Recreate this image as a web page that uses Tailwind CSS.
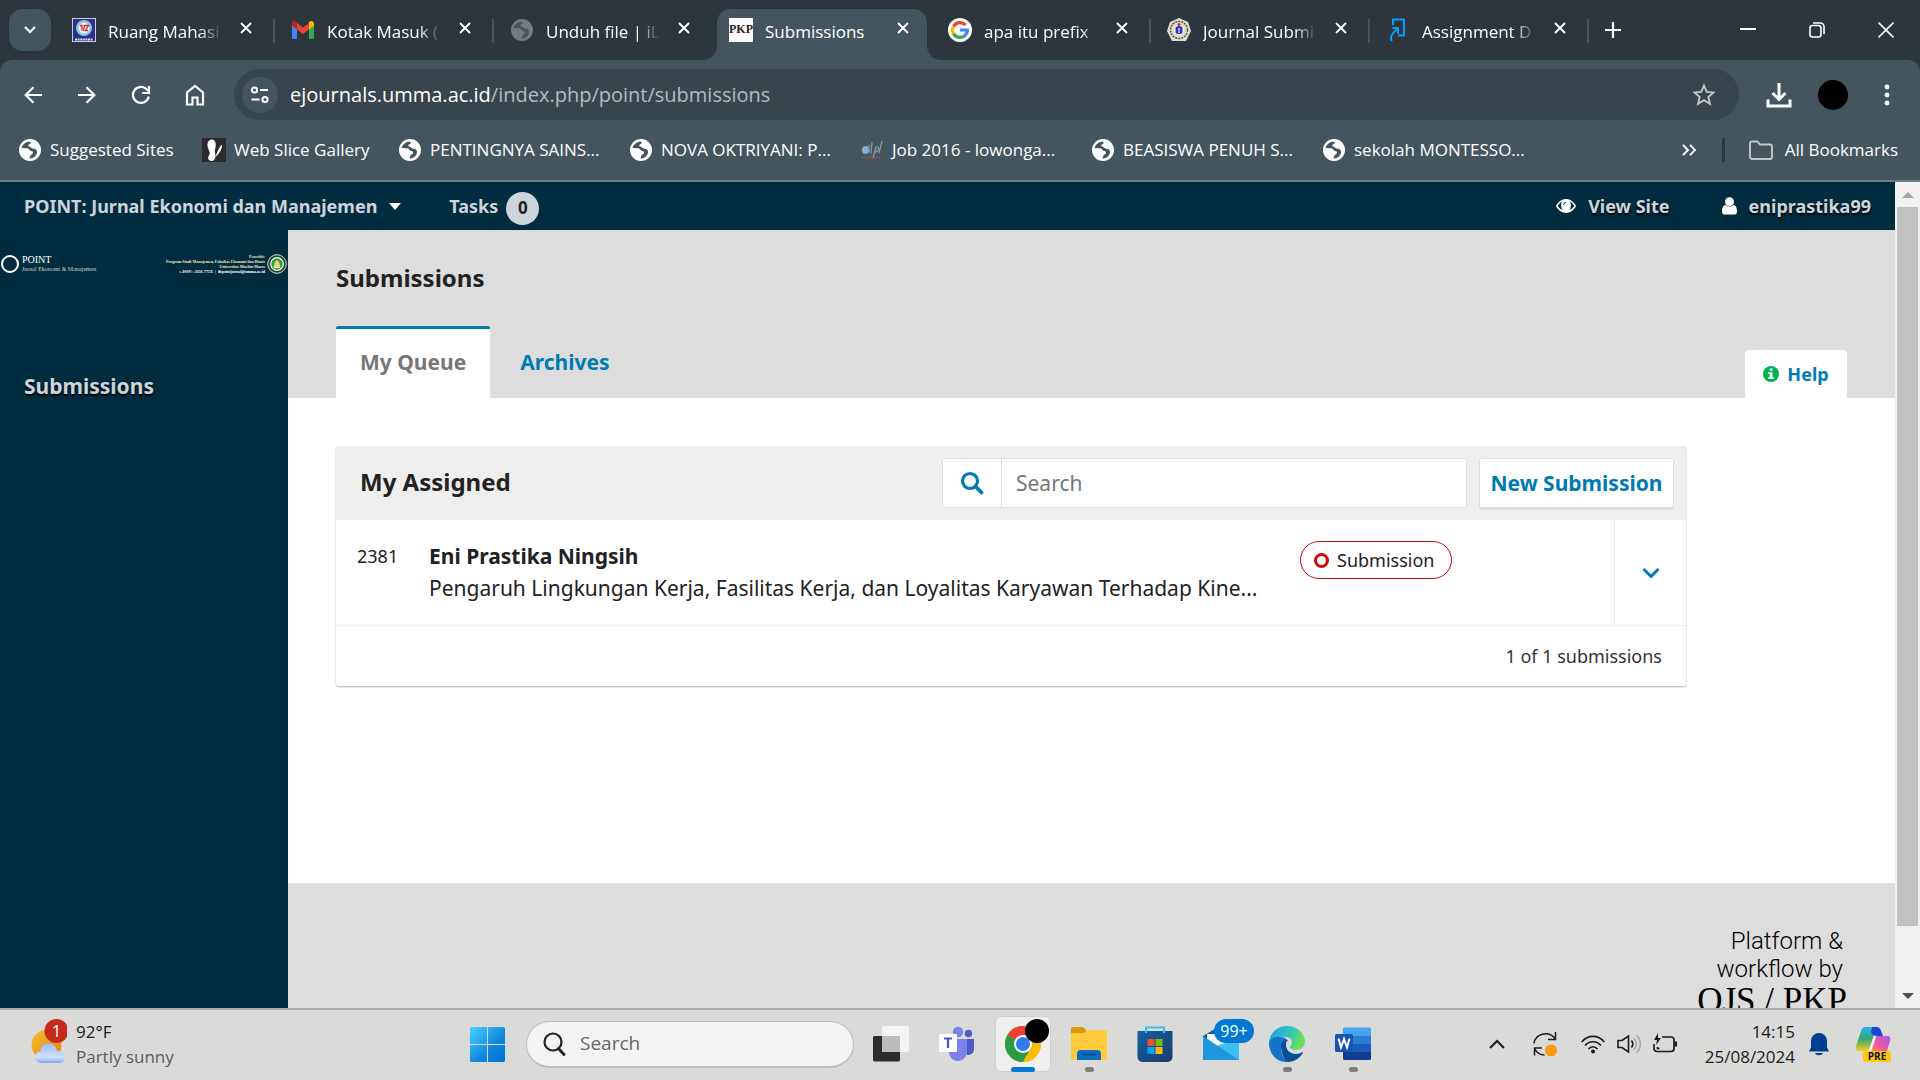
<!DOCTYPE html>
<html lang="en">
<head>
  <meta charset="utf-8" />
  <meta name="viewport" content="width=device-width, initial-scale=1" />
  <title>Submissions</title>
  <script src="https://cdn.jsdelivr.net/npm/@tailwindcss/browser@4"></script>
</head>
<body class="h-screen flex flex-col overflow-hidden bg-white font-['Open_Sans',sans-serif]">
  <!-- shared icons -->
  <svg class="hidden">
    <symbol id="globe" viewBox="0 0 24 24">
      <circle cx="12" cy="12" r="11" fill="currentColor" />
      <path d="M11.5 3.500C7.500 4 4.500 6.500 3.600 10l5.400.2c2.600.2 2.200 2.600 4.600 2.800 1.900.2 1.900 2.400.4 3.200-1.700.8-2.300 2.200-2.300 4.500 4.600-.5 6.700-3 7.300-5.900.5-2.600-1.200-4-3.600-4.100-2-.1-2.400-1.900-4.200-2.200-1.500-.3-1.300-1.900.2-2.300 1.400-.4 1.700-1.500.1-2.700z" fill="#44555e" />
    </symbol>
    <symbol id="close" viewBox="0 0 12 12">
      <path d="M1 1l10 10M11 1L1 11" stroke="currentColor" stroke-width="1.900" fill="none" />
    </symbol>
    <symbol id="lens" viewBox="0 0 24 24">
      <circle cx="10" cy="10" r="7.500" fill="none" stroke="currentColor" stroke-width="3.200" />
      <path d="M15.500 15.500l6 6" stroke="currentColor" stroke-width="3.800" stroke-linecap="round" />
    </symbol>
  </svg>

  <!-- tab strip -->
  <header class="h-[60px] shrink-0 flex bg-[#2c363c] text-white text-[17px]">
    <div class="w-14 shrink-0 pl-[9px] pt-[9px]">
      <button aria-label="Search tabs" class="w-[42px] h-[42px] rounded-[14px] bg-[#44555e] grid place-items-center">
        <svg class="w-3 h-3" viewBox="0 0 12 12"><path d="M1 3l5 5 5-5" stroke="currentColor" stroke-width="2.200" fill="none" /></svg>
      </button>
    </div>
    <div class="w-[219px] shrink-0 flex items-center pl-4 relative">
      <svg class="w-6 h-6 shrink-0" viewBox="0 0 24 24"><rect width="24" height="24" fill="#2b2f8c" /><rect x=".5" y=".5" width="23" height="23" fill="none" stroke="#c9cbe8" /><circle cx="12" cy="10" r="8" fill="#8fc5dc" /><circle cx="12" cy="10" r="5.500" fill="#e8eef5" /><path d="M8 7.500h2v5M12.500 7l-1 6M13 7.500h3.500l-3 5H16" stroke="#d3262f" stroke-width="1.300" fill="none" /><path d="M3 21.500h18" stroke="#dfe0f5" stroke-width="2" stroke-dasharray="2 .6" /></svg>
      <span class="ml-3 pt-[3px] w-[114px] whitespace-nowrap [mask-image:linear-gradient(to_right,#000_80%,transparent)]">Ruang Mahasi</span>
      <button aria-label="Close tab" class="ml-[18px] -mt-1"><svg class="w-3 h-3"><use href="#close" /></svg></button>
      <span class="absolute right-0 top-[19px] w-[2px] h-6 bg-[#44555e]"></span>
    </div>
    <div class="w-[219px] shrink-0 flex items-center pl-4 relative">
      <svg class="w-6 h-6 shrink-0" viewBox="0 0 24 24"><path d="M1 5.500v14A1.500 1.500 0 0 0 2.500 21H6V10z" fill="#4285f4" /><path d="M18 10v11h3.500a1.500 1.500 0 0 0 1.500-1.500v-14z" fill="#34a853" /><path d="M18 5v6.500l5-4V5.500C23 3 20 2 18 4z" fill="#fbbc04" /><path d="M6 11.500V5l6 4.500L18 5v6.500L12 16z" fill="#ea4335" /><path d="M1 5.500v2l5 4V4.500C4 2 1 3 1 5.500z" fill="#c5221f" /></svg>
      <span class="ml-3 pt-[3px] w-[114px] whitespace-nowrap [mask-image:linear-gradient(to_right,#000_80%,transparent)]">Kotak Masuk (</span>
      <button aria-label="Close tab" class="ml-[18px] -mt-1"><svg class="w-3 h-3"><use href="#close" /></svg></button>
      <span class="absolute right-0 top-[19px] w-[2px] h-6 bg-[#44555e]"></span>
    </div>
    <div class="w-[219px] shrink-0 flex items-center pl-4 relative">
      <svg class="w-6 h-6 shrink-0 text-[#75797c]"><use href="#globe" /></svg>
      <span class="ml-3 pt-[3px] w-[114px] whitespace-nowrap [mask-image:linear-gradient(to_right,#000_80%,transparent)]">Unduh file | iL</span>
      <button aria-label="Close tab" class="ml-[18px] -mt-1"><svg class="w-3 h-3"><use href="#close" /></svg></button>
    </div>
    <div class="w-[219px] shrink-0 flex items-center pl-4 relative">
      <svg class="absolute -left-3 bottom-0 w-[242px] h-[51px]" viewBox="0 0 242 51"><path d="M0 51C10 51 16 45 16 36V14C16 6 22 0 30 0H212C220 0 226 6 226 14V36C226 45 232 51 242 51z" fill="#44555e" /></svg>
      <span class="relative w-6 h-6 shrink-0 bg-white text-[#222] font-['Liberation_Serif',serif] font-bold text-[12px] leading-[22px] text-center">PKP</span>
      <span class="relative ml-3 pt-[3px] w-[114px] whitespace-nowrap">Submissions</span>
      <button aria-label="Close tab" class="relative ml-[18px] -mt-1"><svg class="w-3 h-3"><use href="#close" /></svg></button>
    </div>
    <div class="w-[219px] shrink-0 flex items-center pl-4 relative">
      <svg class="w-6 h-6 shrink-0" viewBox="0 0 24 24"><circle cx="12" cy="12" r="12" fill="#fff" /><g fill="none" stroke-width="3.200"><path d="M17.500 7A7.500 7.500 0 0 0 5.500 8.400" stroke="#ea4335" /><path d="M5.500 8.300a7.500 7.500 0 0 0 0 7.400" stroke="#fbbc05" /><path d="M5.500 15.600a7.500 7.500 0 0 0 11.400 2" stroke="#34a853" /><path d="M16.800 17.700A7.500 7.500 0 0 0 19.400 12H12" stroke="#4285f4" /></g></svg>
      <span class="ml-3 pt-[3px] w-[114px] whitespace-nowrap [mask-image:linear-gradient(to_right,#000_85%,transparent)]">apa itu prefix</span>
      <button aria-label="Close tab" class="ml-[18px] -mt-1"><svg class="w-3 h-3"><use href="#close" /></svg></button>
      <span class="absolute right-0 top-[19px] w-[2px] h-6 bg-[#44555e]"></span>
    </div>
    <div class="w-[219px] shrink-0 flex items-center pl-4 relative">
      <svg class="w-6 h-6 shrink-0" viewBox="0 0 24 24"><path d="M12 0l9 4 3 9-5 10H5L0 13l3-9z" fill="#dcdcd6" /><circle cx="12" cy="12" r="8.500" fill="none" stroke="#55554c" stroke-width="1.500" stroke-dasharray="2 1" /><circle cx="12" cy="12" r="6.500" fill="#e8e08a" /><circle cx="12" cy="12" r="5" fill="#fff" /><path d="M8.500 9.500c2-2 5-2 7 0v5c-1 2-6 2-7 0z" fill="#2233dd" /><circle cx="12" cy="6.500" r="1.500" fill="#e02020" /><path d="M12 10v5" stroke="#fff" stroke-width="1.200" /></svg>
      <span class="ml-3 pt-[3px] w-[114px] whitespace-nowrap [mask-image:linear-gradient(to_right,#000_80%,transparent)]">Journal Submi</span>
      <button aria-label="Close tab" class="ml-[18px] -mt-1"><svg class="w-3 h-3"><use href="#close" /></svg></button>
      <span class="absolute right-0 top-[19px] w-[2px] h-6 bg-[#44555e]"></span>
    </div>
    <div class="w-[219px] shrink-0 flex items-center pl-4 relative">
      <svg class="w-6 h-6 shrink-0" viewBox="0 0 24 24"><path d="M7 7V1.500h11v16h-6M6 23c-3-4 0-7 6-13M6.500 10H12v6" fill="none" stroke="#0a9bff" stroke-width="2" /></svg>
      <span class="ml-3 pt-[3px] w-[114px] whitespace-nowrap [mask-image:linear-gradient(to_right,#000_80%,transparent)]">Assignment D</span>
      <button aria-label="Close tab" class="ml-[18px] -mt-1"><svg class="w-3 h-3"><use href="#close" /></svg></button>
      <span class="absolute right-0 top-[19px] w-[2px] h-6 bg-[#44555e]"></span>
    </div>
    <button aria-label="New tab" class="w-12 shrink-0 grid place-items-center">
      <svg class="w-4 h-4" viewBox="0 0 16 16"><path d="M8 0v16M0 8h16" stroke="currentColor" stroke-width="2.200" /></svg>
    </button>
    <div class="ml-auto flex">
      <button aria-label="Minimize" class="w-[69px] grid place-items-center"><svg class="w-4 h-4" viewBox="0 0 16 16"><path d="M0 7h16" stroke="currentColor" stroke-width="2" /></svg></button>
      <button aria-label="Restore" class="w-[69px] grid place-items-center"><svg class="w-4 h-4" viewBox="0 0 16 16" fill="none" stroke="currentColor" stroke-width="1.600"><rect x="1" y="3.500" width="11" height="11.500" rx="2.500" /><path d="M4 1h7.500A3.500 3.500 0 0 1 15 4.500V12" /></svg></button>
      <button aria-label="Close" class="w-[69px] grid place-items-center"><svg class="w-4 h-4" viewBox="0 0 16 16"><path d="M.5.500l15 15M15.500.500l-15 15" stroke="currentColor" stroke-width="1.600" /></svg></button>
    </div>
  </header>

  <!-- toolbar -->
  <div class="bg-[#2c363c] shrink-0">
    <div class="h-[69px] pt-[9px] pb-[9px] flex items-center bg-[#44555e] rounded-t-xl text-white pl-[6px] pr-[6px]">
      <button aria-label="Back" class="w-[54px] grid place-items-center"><svg class="w-[18px] h-[18px]" viewBox="0 0 18 18"><path d="M18 9H2M9.500 1.200L1.700 9l7.800 7.800" stroke="currentColor" stroke-width="2.200" fill="none" /></svg></button>
      <button aria-label="Forward" class="w-[54px] grid place-items-center"><svg class="w-[18px] h-[18px]" viewBox="0 0 18 18"><path d="M0 9h16M8.500 1.200L16.300 9l-7.800 7.800" stroke="currentColor" stroke-width="2.200" fill="none" /></svg></button>
      <button aria-label="Reload" class="w-[54px] grid place-items-center"><svg class="w-[20px] h-[20px]" viewBox="0 0 20 20"><path d="M17.800 11.500A8 8 0 1 1 15.700 4.300L18 6.500" stroke="currentColor" stroke-width="2.200" fill="none" /><path d="M18 1v7h-7" stroke="currentColor" stroke-width="2.200" fill="none" /></svg></button>
      <button aria-label="Home" class="w-[54px] grid place-items-center"><svg class="w-[20px] h-[22px]" viewBox="0 0 20 22"><path d="M2 20.500V8.500L10 2l8 6.500v12h-5.500v-7h-5v7z" stroke="currentColor" stroke-width="2.200" fill="none" /></svg></button>
      <div class="ml-3 mr-[13px] flex-1 h-[51px] rounded-full bg-[#39454c] flex items-center pl-2">
        <button aria-label="Site information" class="w-9 h-9 rounded-full bg-[#44555e] grid place-items-center"><svg class="w-5 h-[18px]" viewBox="0 0 20 18" fill="none" stroke="currentColor" stroke-width="2"><circle cx="4.500" cy="4" r="2.600" /><path d="M10 4h8M1.500 13.500h8" /><circle cx="15" cy="13.500" r="2.600" /></svg></button>
        <div role="textbox" contenteditable="true" spellcheck="false" aria-label="Address" class="ml-3 flex-1 text-[20px] leading-7 text-[#b4bbc0] outline-none"><span class="text-white">ejournals.umma.ac.id</span>/index.php/point/submissions</div>
        <button aria-label="Bookmark" class="mr-[23px] text-[#c4c6c8]"><svg class="w-6 h-6" viewBox="0 0 24 24"><path d="M12 2.500l2.700 6.400 6.800.6-5.200 4.500 1.600 6.800-5.900-3.600-5.900 3.600 1.600-6.800-5.200-4.500 6.800-.6z" stroke="currentColor" stroke-width="1.900" fill="none" /></svg></button>
      </div>
      <button aria-label="Downloads" class="w-[54px] grid place-items-center"><svg class="w-[26px] h-[26px]" viewBox="0 0 26 26" fill="none" stroke="currentColor" stroke-width="3"><path d="M13 1v16M6.500 11l6.500 6.500 6.500-6.500M2 17.500V24h22v-6.500" /></svg></button>
      <button aria-label="Profile" class="w-[54px] grid place-items-center"><span class="w-[30px] h-[30px] rounded-full bg-black"></span></button>
      <button aria-label="Menu" class="w-[54px] grid place-items-center"><svg class="w-[6px] h-[22px]" viewBox="0 0 6 22" fill="currentColor"><circle cx="3" cy="3" r="2.400" /><circle cx="3" cy="11" r="2.400" /><circle cx="3" cy="19" r="2.400" /></svg></button>
    </div>
  </div>

  <!-- bookmarks bar -->
  <nav class="h-[53px] shrink-0 bg-[#44555e] border-b-2 border-[#6f7e85] flex items-start pt-2 pl-[18px] text-white text-[17px] leading-[26px] whitespace-nowrap">
    <a href="#" class="w-[184px] flex items-center gap-2"><svg class="w-6 h-6"><use href="#globe" /></svg>Suggested Sites</a>
    <a href="#" class="w-[196px] flex items-center gap-2"><svg class="w-6 h-6" viewBox="0 0 24 24"><rect width="24" height="24" fill="#2b2b2b" /><path d="M10 1.500c4 0 4.500 6 3 10-.8 2 .5 4 .5 6.500 0 3-2 5.500-4.500 5-3.500-.7-3.500-4-1.500-6.500C9 14 5 11 5.500 6c.3-3 2-4.500 4.500-4.500zM13.500 19c1-3 4-11 6-12 2 0-1 8-6 12z" fill="#fff" /></svg>Web Slice Gallery</a>
    <a href="#" class="w-[231px] flex items-center gap-2"><svg class="w-6 h-6"><use href="#globe" /></svg>PENTINGNYA SAINS...</a>
    <a href="#" class="w-[231px] flex items-center gap-2"><svg class="w-6 h-6"><use href="#globe" /></svg>NOVA OKTRIYANI: P...</a>
    <a href="#" class="w-[231px] flex items-center gap-2"><svg class="w-6 h-6" viewBox="0 0 24 24" fill="none"><ellipse cx="5.500" cy="12" rx="3.500" ry="4" fill="#7eb0d8" /><path d="M9 7v8M12 4l-1 12M13 20l3-11c4-1 3 5-1 5M22 3l-3 12" stroke="#8d999f" stroke-width="1.200" /><path d="M2 19.500h20" stroke="#77565a" stroke-width="2" stroke-dasharray="3 1" /></svg>Job 2016 - lowonga...</a>
    <a href="#" class="w-[231px] flex items-center gap-2"><svg class="w-6 h-6"><use href="#globe" /></svg>BEASISWA PENUH S...</a>
    <a href="#" class="flex items-center gap-2"><svg class="w-6 h-6"><use href="#globe" /></svg>sekolah MONTESSO...</a>
    <div class="ml-auto h-[26px] flex items-center pr-[22px]">
      <button aria-label="More bookmarks"><svg class="w-[14px] h-3" viewBox="0 0 14 12"><path d="M1 .8L6 6l-5 5.200M8 .8L13 6l-5 5.200" stroke="currentColor" stroke-width="1.900" fill="none" /></svg></button>
      <span class="ml-[26px] mr-6 w-[3px] h-6 bg-[#2c363c]"></span>
      <a href="#" class="flex items-center gap-3"><svg class="w-6 h-6" viewBox="0 0 24 24"><path d="M1 5.500C1 4 2 3.500 3 3.500h5.500l2.500 3h10c1.500 0 2 .8 2 2V19c0 1.200-.8 2-2 2H3c-1.200 0-2-.8-2-2z" stroke="#c4c6c8" stroke-width="1.900" fill="none" /></svg>All Bookmarks</a>
    </div>
  </nav>

  <!-- page -->
  <div class="flex-1 min-h-0 flex font-['Noto_Sans',sans-serif]">
    <div class="flex-1 min-w-0 flex flex-col">
      <div class="h-12 shrink-0 bg-[#002c40] flex items-center pl-6 pr-6 text-[18px] font-bold text-[#ccd5d9] [text-shadow:0_2px_2px_#000]">
        <button class="flex items-center gap-3">POINT: Jurnal Ekonomi dan Manajemen<svg class="w-3 h-[7px]" viewBox="0 0 12 7"><path d="M0 0h12L6 7z" fill="#fff" /></svg></button>
        <button class="ml-12 flex items-center gap-2">Tasks <span class="mt-1 w-[33px] h-[33px] rounded-full bg-[#ccd5db] text-[#222] text-[17px] grid place-items-center [text-shadow:none]">0</span></button>
        <a href="#" class="ml-auto flex items-center gap-3"><svg class="w-5 h-[14px]" viewBox="0 0 20 14"><path d="M0 7C5-2.300 15-2.300 20 7 15 16.300 5 16.300 0 7z" fill="#fff" /><path d="M1.800 7C3.500 4 5.500 2.500 6 2.500 4.500 5 5 9 6.500 11 4.500 10 3 9 1.800 7zM18.200 7C16.500 4 14.500 2.500 14 2.500c1.500 2.500 1 6.500-.5 8.500 2-1 3.500-2 4.700-4z" fill="#002c40" /><path d="M7.500 6A2.700 2.700 0 0 1 10 3.500" stroke="#002c40" fill="none" /></svg>View Site</a>
        <a href="#" class="ml-[52px] flex items-center gap-3"><svg class="w-[15px] h-[18px]" viewBox="0 0 15 18"><circle cx="7.500" cy="4.800" r="4.500" fill="#fff" /><path d="M3.500 8c2.500 2 5.500 2 8 0 2.300.2 3.500 3 3.500 6s-1.300 3.500-3 3.500H3c-1.700 0-3-.5-3-3.500s1.200-5.800 3.500-6z" fill="#fff" /></svg>eniprastika99</a>
      </div>
      <div class="flex-1 min-h-0 flex">
        <aside class="w-[288px] shrink-0 bg-[#002c40]">
          <a href="#" aria-label="POINT" class="mt-6 h-5 flex items-center text-white font-['Liberation_Serif',serif] whitespace-nowrap px-px">
            <svg class="w-[18px] h-[18px]" viewBox="0 0 18 18"><circle cx="9" cy="9" r="8" fill="none" stroke="#fff" stroke-width="2" /></svg>
            <span class="ml-[3px]"><span class="block text-[10px] leading-[11px]">POINT</span><span class="block text-[6px] leading-[9px] text-[#c8d0d4]">Jurnal Ekonomi &amp; Manajemen</span></span>
            <span class="ml-auto text-right text-[4px] leading-[5px] font-bold text-[#f0e8c0]">Penerbit:<br />Program Studi Manajemen, Fakultas Ekonomi dan Bisnis<br />Universitas Muslim Maros<br /><span class="text-white">e-ISSN : 2656-775X &nbsp;|&nbsp; ✉ pointjurnal@umma.ac.id</span></span>
            <svg class="ml-[2px] w-5 h-5" viewBox="0 0 20 20"><circle cx="10" cy="10" r="9.300" fill="#1d4a2c" stroke="#cfe0c8" /><circle cx="10" cy="10" r="6.300" fill="#2f9e44" stroke="#fff" stroke-width="1.200" /><path d="M6.500 13l1.500-5 2-2 2 2 1.500 5z" fill="#e6d26a" /><path d="M7 13.500h6" stroke="#fff" /></svg>
          </a>
          <nav class="mt-[98px] pl-6">
            <a href="#" class="text-[21px] leading-7 font-bold text-[#ccd5d9] [text-shadow:0_2px_2px_#000]">Submissions</a>
          </nav>
        </aside>
        <main class="flex-1 min-w-0 flex flex-col text-[#222]">
          <div class="h-[168px] shrink-0 bg-[#ddd] pl-12 pr-12 flex flex-col">
            <h1 class="mt-8 text-[24px] leading-8 font-bold">Submissions</h1>
            <div class="mt-auto flex items-end text-[21px] font-bold">
              <button class="h-[72px] px-6 pb-[2px] border-t-3 border-[#007ab2] bg-white text-[#777] rounded-t-[2px]">My Queue</button>
              <button class="h-[72px] ml-[6px] px-6 pb-[2px] border-t-3 border-transparent text-[#007ab2]">Archives</button>
              <button class="ml-auto h-12 w-[102px] bg-white rounded-t-[3px] flex items-center justify-center gap-2 text-[18px] text-[#007ab2]">
                <svg class="w-4 h-4" viewBox="0 0 16 16"><circle cx="8" cy="8" r="8" fill="#00b24e" /><path d="M6.700 2.500h2.800v2.200H6.700zM5.200 6.200h4.300v5h1.300v1.800H5.200v-1.800h1.500V8H5.200z" fill="#fff" /></svg>Help
              </button>
            </div>
          </div>
          <div class="flex-1 pt-12 pl-12 pr-[209px]">
            <section class="rounded-[3px] shadow-[0_1px_2px_rgba(0,0,0,0.3)]">
              <div class="h-[74px] bg-[#eee] flex items-center pl-6 pr-3">
                <h2 class="pb-[2px] text-[24px] leading-8 font-bold">My Assigned</h2>
                <div class="ml-auto w-[525px] h-[50px] flex border border-[#ddd] rounded-[3px] bg-white">
                  <label for="search" class="w-[59px] grid place-items-center text-[#007ab2] border-r border-[#ddd]"><svg class="w-6 h-6" aria-label="Search"><use href="#lens" /></svg></label>
                  <input id="search" type="search" placeholder="Search" class="flex-1 min-w-0 px-[14px] pt-[2px] text-[21px] outline-none placeholder:text-[#777]" />
                </div>
                <button class="ml-3 h-[50px] w-[195px] pt-[2px] whitespace-nowrap bg-white border border-[#ddd] rounded-[3px] shadow-[0_2px_0_#ddd] text-[21px] font-bold text-[#007ab2]">New Submission</button>
              </div>
              <div class="h-[106px] border-b border-[#eee] flex">
                <span class="w-[93px] pl-[21px] pt-[22px] text-[18px] leading-7">2381</span>
                <div class="w-[871px] pt-5">
                  <p class="text-[21px] leading-8 font-bold">Eni Prastika Ningsih</p>
                  <p class="text-[21px] leading-8">Pengaruh Lingkungan Kerja, Fasilitas Kerja, dan Loyalitas Karyawan Terhadap Kine...</p>
                </div>
                <span class="mt-[21px] h-[38px] px-[13px] flex items-center gap-2 border border-[#d00a0a] rounded-full text-[18px]"><span class="w-[15px] h-[15px] rounded-full border-[3px] border-[#d00a0a]"></span><a href="#" class="pr-1">Submission</a></span>
                <button aria-label="Show details" class="ml-auto w-[72px] border-l border-[#eee] grid place-items-center text-[#007ab2]"><svg class="w-[18px] h-3" viewBox="0 0 18 12"><path d="M1.500 2L9 9.500 16.500 2" stroke="currentColor" stroke-width="3" fill="none" /></svg></button>
              </div>
              <p class="h-[60px] pr-6 text-right text-[18px] leading-[60px] text-[#333]">1 of 1 submissions</p>
            </section>
          </div>
          <footer class="h-[125px] shrink-0 overflow-hidden bg-[#ddd] pt-11 pr-[48px] text-right text-black">
            <p class="pr-1 text-[24px] leading-7 font-light font-['Roboto',sans-serif]">Platform &amp;<br />workflow by</p>
            <p class="text-[35px] leading-[36px] font-['Liberation_Serif',serif]">OJS / PKP</p>
          </footer>
        </main>
      </div>
    </div>
    <!-- scrollbar -->
    <div class="w-[25px] shrink-0 bg-[#f1f1f1] flex flex-col items-center">
      <svg class="w-3 h-[25px]" viewBox="0 0 12 25"><path d="M0 16l6-6 6 6z" fill="#a3a3a3" /></svg>
      <div class="w-[21px] h-[719px] bg-[#c1c1c1]"></div>
      <svg class="mt-auto w-3 h-[25px]" viewBox="0 0 12 25"><path d="M0 10l6 6 6-6z" fill="#505050" /></svg>
    </div>
  </div>

  <!-- taskbar -->
  <div class="h-[72px] shrink-0 bg-[#dadad9] border-t-2 border-[#adadad] flex items-center pl-[31px] pr-[29px] pb-[2px] text-[17px] leading-[25px] text-[#1b1b1b]">
    <button class="w-[433px] flex items-center gap-[9px] text-left">
      <svg class="w-9 h-[50px] shrink-0" viewBox="0 0 36 50">
        <defs>
          <linearGradient id="sun" x1="0" y1="0" x2="1" y2="1"><stop offset="0" stop-color="#f0c02c" /><stop offset="1" stop-color="#ee7a14" /></linearGradient>
          <linearGradient id="cloud" x1="0" y1="0" x2="0" y2="1"><stop offset="0" stop-color="#9dbdf2" /><stop offset=".7" stop-color="#cfe0fb" /><stop offset="1" stop-color="#88a8ea" /></linearGradient>
        </defs>
        <circle cx="15.500" cy="26" r="15" fill="url(#sun)" />
        <path d="M9 45a6 6 0 0 1-1-12c0-5 4-7.500 8-7.500s8 3 8.500 7.500A6 6 0 0 1 28 45z" fill="url(#cloud)" transform="translate(1.500 -1)" />
        <circle cx="25.500" cy="12" r="12" fill="#c42b1c" />
        <text x="25.500" y="18" text-anchor="middle" font-size="17" fill="#fff">1</text>
      </svg>
      <span>92°F<br /><span class="text-[#5c5c5c]">Partly sunny</span></span>
    </button>
    <button aria-label="Start" class="ml-[6px]"><svg class="w-[35px] h-[35px]" viewBox="0 0 35 35"><defs><linearGradient id="win" x1="0" y1="0" x2="1" y2="1"><stop offset="0" stop-color="#4ad2ff" /><stop offset=".6" stop-color="#0f86dc" /><stop offset="1" stop-color="#0074d1" /></linearGradient></defs><path d="M1.500 0H17v17H0V1.500A1.500 1.500 0 0 1 1.500 0zM18 0h15.500A1.500 1.500 0 0 1 35 1.500V17H18zM0 18h17v17H1.500A1.500 1.500 0 0 1 0 33.500zM18 18h17v15.500a1.500 1.500 0 0 1-1.500 1.500H18z" fill="url(#win)" /></svg></button>
    <form class="ml-[21px] w-[328px] h-[47px] flex items-center rounded-full bg-[#f3f3f3] border border-b-2 border-[#bdbdbd] pl-[15px]">
      <svg class="w-6 h-6 shrink-0" viewBox="0 0 24 24" fill="none" stroke="#222" stroke-width="2.200"><circle cx="11" cy="10" r="8.500" /><path d="M16.500 16.500l5.500 6" stroke-linecap="round" stroke-width="2.800" /></svg>
      <label for="tbsearch" class="sr-only">Search</label>
      <input id="tbsearch" placeholder="Search" class="ml-[14px] w-48 text-[19px] outline-none placeholder:text-[#666]" />
    </form>
    <div class="ml-1 flex h-full items-center">
      <button aria-label="Task view" class="w-[66px] grid place-items-center"><svg class="w-9 h-9" viewBox="0 0 36 36"><rect y="10" width="27" height="25.500" rx="1.500" fill="#2c2c2c" /><rect x="9" y="0" width="27" height="26" rx="1.500" fill="#f4f4f4" /><path d="M9 10h18v16H9z" fill="#bcbcbc" /></svg></button>
      <button aria-label="Teams" class="w-[66px] grid place-items-center"><svg class="w-9 h-9" viewBox="0 0 36 36"><circle cx="19" cy="6" r="5.200" fill="#7b83eb" /><circle cx="29.500" cy="7.500" r="3.700" fill="#5059c9" /><path d="M25 13h10v10c0 4-3 6-7 6z" fill="#5059c9" /><path d="M10 13h18v12c0 6-4 10-9 10s-9-4-9-9z" fill="#7b83eb" /><rect y="8" width="18" height="18" rx="1" fill="#fff" /><path d="M5 12.500h8M9 12.500V22" stroke="#4b53bc" stroke-width="2.200" /></svg></button>
      <button aria-label="Chrome" class="w-[66px] h-[60px] grid place-items-center relative">
        <span class="absolute inset-x-[5px] inset-y-[2px] rounded-md bg-[#efefef] border border-[#cfcfcf]"></span>
        <svg class="relative w-9 h-9" viewBox="0 0 36 36"><circle cx="18" cy="18" r="18" fill="#fbbc05" /><path d="M18 18L2.400 9A18 18 0 0 1 33.600 9H18z" fill="#ea4335" /><path d="M2.400 9a18 18 0 0 0 15.600 27l7.800-13.500L18 18z" fill="#2b9b48" /><path d="M18 36l7.800-13.500L33.600 9A18 18 0 0 1 18 36z" fill="#fbbc05" /><circle cx="18" cy="18" r="9" fill="#fff" /><circle cx="18" cy="18" r="7" fill="#2f7bee" /></svg>
        <span class="absolute right-[7px] top-[5px] w-6 h-6 rounded-full bg-black"></span>
        <span class="absolute bottom-[2px] w-6 h-[5px] rounded-full bg-[#0078d4]"></span>
      </button>
      <button aria-label="File Explorer" class="w-[66px] h-[60px] grid place-items-center relative"><svg class="w-9 h-9" viewBox="0 0 36 36"><path d="M0 3a2 2 0 0 1 2-2h10l3 3v4H0z" fill="#d99a09" /><path d="M0 7h13l3-3h20v30H0z" fill="#fecb3e" /><path d="M6 34v-6a4 4 0 0 1 4-4h16a4 4 0 0 1 4 4v6z" fill="#0a6dc0" /><path d="M11 28.500h14" stroke="#064a8a" stroke-width="1.800" /></svg><span class="absolute bottom-[2px] w-[9px] h-[5px] rounded-full bg-[#7d7d7d]"></span></button>
      <button aria-label="Microsoft Store" class="w-[66px] grid place-items-center"><svg class="w-9 h-9" viewBox="0 0 36 36"><defs><linearGradient id="bag" x1="0" y1="0" x2="1" y2="1"><stop offset="0" stop-color="#0f63a8" /><stop offset="1" stop-color="#203a68" /></linearGradient></defs><path d="M.5 5h35v26a5 5 0 0 1-5 5h-25a5 5 0 0 1-5-5z" fill="url(#bag)" /><path d="M9 7V1.500h18V7" stroke="#35c0f0" stroke-width="2" fill="none" /><path d="M10.500 13h7v7h-7z" fill="#f25022" /><path d="M18.500 13h7v7h-7z" fill="#7fba00" /><path d="M10.500 21h7v7h-7z" fill="#00a4ef" /><path d="M18.500 21h7v7h-7z" fill="#ffb900" /></svg></button>
      <button aria-label="Mail" class="w-[66px] h-[60px] grid place-items-center relative"><svg class="w-9 h-9" viewBox="0 0 36 36"><path d="M0 10L12 3h12l12 7v10H0z" fill="#0a5aa5" /><path d="M4 8h28v12L18 26 4 14z" fill="#f4f4f4" /><path d="M36 12v22L14 20z" fill="#3ac0f2" /><path d="M0 10l36 24H0z" fill="#1f96de" /></svg><span class="absolute right-0 top-[5px] h-6 w-10 rounded-full bg-[#0078d4] text-white text-center text-[16px] leading-6">99+</span></button>
      <button aria-label="Edge" class="w-[66px] h-[60px] grid place-items-center relative"><svg class="w-9 h-9" viewBox="0 0 36 36"><defs><linearGradient id="edge" x1="0" y1="0" x2="1" y2=".3"><stop offset="0" stop-color="#1a9fdc" /><stop offset=".6" stop-color="#32c4c0" /><stop offset="1" stop-color="#6be05a" /></linearGradient></defs><path d="M0 17C1 6 9 0 18 0c11 0 18 8 18 15 0 6-4 9-9 9-4 0-6-2-6-3s2-2 2-5-3-5-7-5C8 10 1 14 0 17z" fill="url(#edge)" /><path d="M0 17c1-5 7-7 12-6 4 .6 6 2 7 4-8 0-10 14 0 21C8 37 0 28 0 17z" fill="#1673c8" /><path d="M12 20c0-5 4-6 6-6-3 7 1 14 9 14 4 0 6-2 7-2 .5.5-5 10-15 10-4-1-7-10-7-16z" fill="#0c4f99" /></svg><span class="absolute bottom-[2px] w-[9px] h-[5px] rounded-full bg-[#7d7d7d]"></span></button>
      <button aria-label="Word" class="w-[66px] h-[60px] grid place-items-center relative"><svg class="w-9 h-9" viewBox="0 0 36 36"><path d="M8 3a1.500 1.500 0 0 1 1.500-1.500h25A1.500 1.500 0 0 1 36 3v6.500H8z" fill="#41a5ee" /><path d="M8 9.500h28v8.500H8z" fill="#2b7cd3" /><path d="M8 18h28v8H8z" fill="#185abd" /><path d="M8 26h28v6.500a1.500 1.500 0 0 1-1.500 1.500h-25A1.500 1.500 0 0 1 8 32.500z" fill="#103f91" /><rect y="8" width="18" height="18" rx="1.500" fill="#1653b5" /><path d="M3.500 12.500l2.500 9 3-8.500 3 8.500 2.500-9" stroke="#fff" stroke-width="2" fill="none" /></svg><span class="absolute bottom-[2px] w-[9px] h-[5px] rounded-full bg-[#7d7d7d]"></span></button>
    </div>
    <div class="ml-auto flex items-center">
      <button aria-label="Hidden icons"><svg class="w-4 h-[10px]" viewBox="0 0 16 10"><path d="M1 9l7-7 7 7" stroke="currentColor" stroke-width="2" fill="none" /></svg></button>
      <button aria-label="Update" class="ml-7"><svg class="w-6 h-6" viewBox="0 0 24 24" fill="none" stroke="currentColor" stroke-width="1.500"><path d="M1 11.500C2 3 15-3 22.500 7M22.500 0v7.500H15M9 16H1.500v7.500M1.500 16.500c2 4 5 6.500 10 6.500" /><circle cx="18" cy="18.500" r="6" fill="#ff9a0c" stroke="none" /></svg></button>
      <button aria-label="Network" class="ml-6"><svg class="w-6 h-6" viewBox="0 0 24 24" fill="none" stroke="currentColor" stroke-width="1.700"><path d="M.7 10C7 2.500 17 2.500 23.300 10M4 13.500c4.500-5 11.500-5 16 0M7.500 17c2.700-3 6.300-3 9 0" /><circle cx="12" cy="19.500" r="2" fill="currentColor" stroke="none" /></svg></button>
      <button aria-label="Volume" class="ml-3"><svg class="w-6 h-6" viewBox="0 0 24 24" fill="none" stroke="currentColor" stroke-width="1.600"><path d="M1 8.500h4L11.500 4v16L5 15.500H1z" /><path d="M14.500 8.500c1.500 2 1.500 5 0 7" /><path d="M17 6c3 3.500 3 8.500 0 12M19.500 3c5 5 5 13 0 18" stroke="#a8a8a8" /></svg></button>
      <button aria-label="Battery" class="ml-3"><svg class="w-6 h-6" viewBox="0 0 24 24" fill="none" stroke="currentColor" stroke-width="1.700"><path d="M9 5h9a3 3 0 0 1 3 3v8.500a3 3 0 0 1-3 3H4a3 3 0 0 1-3-3V12" /><path d="M21.500 9.500h2.500v5h-2.500zM5 1L1 8h3l-1 5 5-7H5z" fill="currentColor" stroke="none" /><path d="M4.500 15v1.500h2" /></svg></button>
      <button class="ml-7 text-right">14:15<br />25/08/2024</button>
      <button aria-label="Notifications" class="ml-[14px]"><svg class="w-5 h-6" viewBox="0 0 20 24"><path d="M0 19.500l2-4V9a8 8 0 0 1 16 0v6.500l2 4zM6 21h8c-1 3-7 3-8 0z" fill="#003e92" /></svg></button>
      <button aria-label="Copilot" class="ml-[26px]"><svg class="w-9 h-9" viewBox="0 0 36 36"><defs><linearGradient id="cpa" x1="0" y1="0" x2="0" y2="1"><stop offset="0" stop-color="#28b0f0" /><stop offset=".5" stop-color="#3aa675" /><stop offset="1" stop-color="#f5cf1c" /></linearGradient><linearGradient id="cpb" x1="1" y1="0" x2="0" y2="1"><stop offset="0" stop-color="#a45cf0" /><stop offset=".6" stop-color="#ee5a9c" /><stop offset="1" stop-color="#fa9050" /></linearGradient></defs><path d="M10 1h12l-7 20c-1 3-2 4-5 4H4c-3 0-4-2-3-5l5-15c1-3 2-4 4-4z" fill="url(#cpa)" /><path d="M17 1h5c2 0 3 1 4 4l2 5h-6c-3 0-5-1-6-4z" fill="#1848d0" /><path d="M22 10h10c3 0 4 2 3 5l-3 10H15l4-12c.6-2 1.500-3 3-3z" fill="url(#cpb)" /><path d="M20 10l-5 15" stroke="#f4f0ff" stroke-width="2.500" /><rect x="8" y="25" width="28" height="11" rx="3" fill="#ffc60a" /><text x="22" y="34" text-anchor="middle" font-size="10" font-weight="700" fill="#111">PRE</text></svg></button>
    </div>
  </div>
</body>
</html>
